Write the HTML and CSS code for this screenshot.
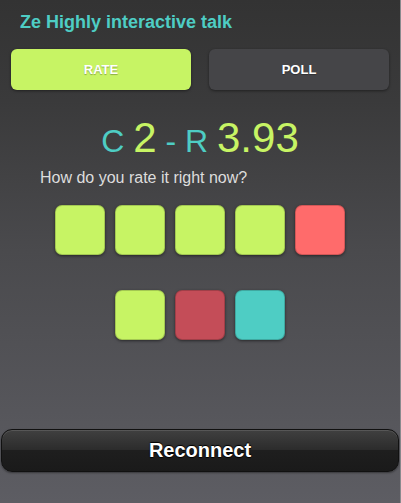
FILE: index.html
```html
<!DOCTYPE html>
<html>
<head>
<meta charset="utf-8">
<link rel="stylesheet" href="styles.css">
</head>
<body>
<div class="app">
  <h1 class="title">Ze Highly interactive talk</h1>
  <div class="tabs">
    <div class="tab tab-active">RATE</div>
    <div class="tab">POLL</div>
  </div>
  <div class="score"><span class="lbl">C </span><span class="num">2</span><span class="lbl"> - R </span><span class="num">3.93</span></div>
  <div class="question">How do you rate it right now?</div>
  <div class="grid">
    <div class="row">
      <div class="sq green"></div>
      <div class="sq green"></div>
      <div class="sq green"></div>
      <div class="sq green"></div>
      <div class="sq red"></div>
    </div>
    <div class="row">
      <div class="sq green"></div>
      <div class="sq dred"></div>
      <div class="sq teal"></div>
    </div>
  </div>
  <div class="reconnect">Reconnect</div>
</div>
</body>
</html>
```

FILE: styles.css
```css
html, body {
  margin: 0;
  padding: 0;
  width: 401px;
  height: 503px;
  overflow: hidden;
  background: #5c5c62;
}
.app {
  box-sizing: border-box;
  width: 401px;
  height: 503px;
  border-right: 1px solid #8a8a8e;
  background: linear-gradient(to bottom, #333333 0%, #3a3a3b 20%, #4a4a4d 50%, #5d5d63 100%);
  display: flex;
  flex-direction: column;
  font-family: "Liberation Sans", Arial, sans-serif;
}
.title {
  margin: 11px 0 0 20px;
  font-size: 18px;
  line-height: 22px;
  font-weight: bold;
  color: #4ecdc4;
}
.tabs {
  display: flex;
  gap: 18px;
  padding: 0 11px;
  margin-top: 16px;
}
.tab {
  width: 180px;
  height: 41px;
  border-radius: 6px;
  background: #454548;
  box-shadow: 0 1px 3px rgba(0,0,0,0.45);
  color: #fff;
  font-weight: bold;
  font-size: 13px;
  display: flex;
  align-items: center;
  justify-content: center;
  text-shadow: 0 1px 1px rgba(0,0,0,0.3);
}
.tab-active {
  background: #c7f464;
}
.score {
  margin-top: 23px;
  height: 50px;
  text-align: center;
  font-size: 42px;
  line-height: 50px;
  color: #c7f464;
}
.lbl {
  font-size: 32px;
  line-height: 32px;
  color: #4ecdc4;
}
.num {
  color: #c7f464;
}
.question {
  margin: 5px 0 0 40px;
  font-size: 16px;
  line-height: 19px;
  color: #dddddd;
}
.grid {
  margin-top: 18px;
  display: flex;
  flex-direction: column;
  gap: 35px;
}
.row {
  display: flex;
  justify-content: center;
  gap: 10px;
}
.sq {
  width: 50px;
  height: 50px;
  box-sizing: border-box;
  border-radius: 7px;
  border: 1px solid rgba(0,0,0,0.18);
  box-shadow: 0 1px 3px rgba(0,0,0,0.5);
}
.green { background: #c7f464; }
.red { background: #ff6b6b; }
.dred { background: #c44d58; }
.teal { background: #4ecdc4; }
.reconnect {
  margin: auto 1px 31px 1px;
  height: 43px;
  box-sizing: border-box;
  border: 1px solid #111;
  border-radius: 11px;
  background: linear-gradient(to bottom, #404040 0%, #2c2c2c 48%, #1e1e1e 50%, #1a1a1a 100%);
  box-shadow: inset 0 1px 0 rgba(255,255,255,0.12), 0 1px 2px rgba(0,0,0,0.4);
  color: #fff;
  font-weight: bold;
  font-size: 20px;
  display: flex;
  align-items: center;
  justify-content: center;
  text-shadow: 0 1px 1px #000, 0 -1px 1px #000;
}
```
